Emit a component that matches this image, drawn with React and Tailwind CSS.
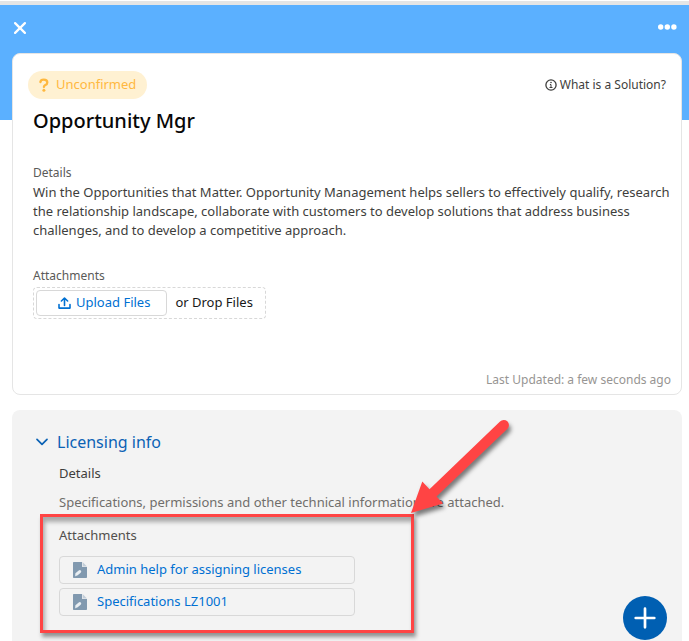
import { useState } from 'react';

// ==============================================================================
// ICONS
// ==============================================================================
const CloseIcon = () => (
  <svg className="h-3 w-3" viewBox="0 0 12 12" fill="none" stroke="currentColor" strokeWidth={2.2} strokeLinecap="round">
    <path d="M1.1 1.1l9.8 9.8M10.9 1.1l-9.8 9.8" />
  </svg>
);

const DotsIcon = () => (
  <svg className="h-[6px] w-5" viewBox="0 0 20 6" fill="currentColor">
    <circle cx="3.7" cy="3" r="2.7" />
    <circle cx="10.3" cy="3" r="2.7" />
    <circle cx="16.9" cy="3" r="2.7" />
  </svg>
);

const QuestionIcon = () => (
  <svg className="h-[14px] w-[10px]" viewBox="0 0 10 14" fill="none" stroke="currentColor" strokeWidth={2.3} strokeLinecap="round">
    <path d="M1.4 4C1.600 2.300 3 1.600 4.800 1.600s3.500 1 3.500 2.800-1.300 2.300-2.300 2.900C5.200 7.800 4.900 8.200 4.900 9" />
    <circle cx="4.9" cy="12.200" r="1.500" fill="currentColor" stroke="none" />
  </svg>
);

const InfoIcon = () => (
  <svg className="h-3 w-3" viewBox="0 0 12 12" fill="none" stroke="currentColor">
    <circle cx="6" cy="6" r="5.1" strokeWidth={1.3} />
    <circle cx="6" cy="3.5" r="0.8" fill="currentColor" stroke="none" />
    <path d="M4.9 5.5H6v3M4.500 8.500h3" strokeWidth={1} />
  </svg>
);

const UploadIcon = () => (
  <svg className="h-3 w-[13px]" viewBox="0 0 13 12" fill="none" stroke="currentColor" strokeWidth={1.6} strokeLinecap="round" strokeLinejoin="round">
    <path d="M1 7.6v3.5h11V7.6M6.5 8.4V1.2M3.4 4l3.1-3 3.1 3" />
  </svg>
);

const ChevronIcon = () => (
  <svg className="h-2 w-3" viewBox="0 0 12 8" fill="none" stroke="currentColor" strokeWidth={1.7} strokeLinecap="round" strokeLinejoin="round">
    <path d="M1 1.3l5 5 5-5" />
  </svg>
);

const FileIcon = () => (
  <svg className="h-4 w-[14px]" viewBox="0 0 14 16">
    <path d="M1 0h8v4c0 .6.400 1 1 1h4v10c0 .6-.400 1-1 1H1c-.6 0-1-.4-1-1V1c0-.6.400-1 1-1z" fill="#8199af" />
    <path d="M9.600 0L14 4.400h-3.600a.8.8 0 0 1-.8-.8z" fill="#c3ced9" />
    <path d="M3.700 12.200l3-2.600" stroke="#e9eef2" strokeWidth={3} strokeLinecap="round" />
    <path d="M2.400 13.800l.8-.8" stroke="#e9eef2" strokeWidth={1} strokeLinecap="round" />
  </svg>
);

const PlusIcon = () => (
  <svg className="h-[22px] w-[22px]" viewBox="0 0 22 22" fill="none" stroke="currentColor" strokeWidth={2.7} strokeLinecap="round">
    <path d="M11 1.700v18.600M1.700 11h18.600" />
  </svg>
);

// ==============================================================================
// CALLOUT: RED FRAME AND ARROW OVER THE ATTACHMENTS
// ==============================================================================
const Callout = () => (
  <div className="pointer-events-none absolute -top-[10px] -left-[19px] h-[119px] w-[374px] border-3 border-[#ff4444] shadow-[2px_4px_4px_rgba(0,0,0,0.4),inset_2px_5px_4px_rgba(0,0,0,0.3)]">
    <svg
      className="absolute -top-[103px] -right-[106px] h-[100px] w-[110px] overflow-visible drop-shadow-[2px_4px_2px_rgba(0,0,0,0.5)]"
      viewBox="0 0 110 100"
      fill="#ff4444"
    >
      <path d="M4 99L15.300 67.500L22.500 75.200L93 7.500A5 5 0 0 1 100.500 14.700L29.500 82.500L36 89.500z" />
    </svg>
  </div>
);

const files = ['Admin help for assigning licenses', 'Specifications LZ1001'];

// ==============================================================================
// PAGE
// ==============================================================================
export default function App() {
  const [open, setOpen] = useState(true);

  return (
    <div className="flex min-h-screen flex-col bg-white pt-px font-['Noto_Sans','Open_Sans',sans-serif] text-[13px] text-[#3e3e3c]">
      {/* Top bar */}
      <header className="flex h-[119px] items-start justify-between border-t-4 border-[#e5e5e5] bg-[#5bb0ff] px-3 pt-[15px] text-white">
        <button type="button" aria-label="Close" className="p-[2px]">
          <CloseIcon />
        </button>
        <button type="button" aria-label="More actions" className="py-1">
          <DotsIcon />
        </button>
      </header>

      {/* Solution card */}
      <section className="-mt-[67px] mr-[7px] ml-3 rounded-lg border border-[#e5e5e5] bg-white px-5 pb-1">
        <div className="-ml-[5px] flex items-center justify-between pt-[17px] pr-[1px]">
          <span className="flex h-7 items-center gap-[7px] rounded-full bg-[#fff1d2] px-[11px] text-[#ffb83f]">
            <QuestionIcon />
            Unconfirmed
          </span>
          <a href="#solution" className="-mr-[6px] flex items-center gap-[3px] text-xs">
            <InfoIcon />
            What is a Solution?
          </a>
        </div>
        <h1 className="mt-2 text-xl leading-7 font-medium text-[#080707]">Opportunity Mgr</h1>

        <h2 className="mt-7 text-xs leading-5 text-[#5a5a58]">Details</h2>
        <p className="-mr-4 leading-[19px]">
          Win the Opportunities that Matter. Opportunity Management helps sellers to effectively qualify, research the
          relationship landscape, collaborate with customers to develop solutions that address business challenges, and
          to develop a competitive approach.
        </p>

        <h2 className="mt-[26px] text-xs leading-5 text-[#5a5a58]">Attachments</h2>
        <div className="mt-px flex h-8 w-fit items-center rounded border border-dashed border-[#d8d8d8] pr-3 pl-[2px]">
          <button
            type="button"
            className="flex h-[26px] items-center gap-[5px] rounded border border-[#d8d8d8] pr-4 pl-[21px] text-[#0070d2]"
          >
            <UploadIcon />
            Upload Files
          </button>
          <span className="ml-2 text-[#181818]">or Drop Files</span>
        </div>

        <p className="mt-[51px] -mr-[10px] text-right text-xs leading-5 text-[#979593]">
          Last Updated: a few seconds ago
        </p>
      </section>

      {/* Licensing panel */}
      <section className="mt-[15px] mr-[7px] ml-3 flex-1 rounded-t-lg bg-[#f3f3f3] px-6 pt-5">
        <button
          type="button"
          aria-expanded={open}
          onClick={() => setOpen(!open)}
          className="flex items-center gap-[9px] text-base leading-6 text-[#0b62b5]"
        >
          <ChevronIcon />
          Licensing info
        </button>

        {open && (
          <div className="pl-[23px]">
            <h2 className="mt-[9px] leading-5">Details</h2>
            <p className="mt-[9px] leading-5 text-[#706e6b]">
              Specifications, permissions and other technical information are attached.
            </p>

            <div className="relative mt-3 pt-px">
              <h2 className="leading-5 text-[#514f4d]">Attachments</h2>
              <ul className="mt-[11px] flex max-w-[296px] flex-col gap-1">
                {files.map((name) => (
                  <li key={name}>
                    <a
                      href="#file"
                      className="flex h-7 items-center gap-[10px] rounded border border-[#d8d8d8] px-[13px] text-[#0070d2]"
                    >
                      <FileIcon />
                      {name}
                    </a>
                  </li>
                ))}
              </ul>
              <Callout />
            </div>
          </div>
        )}
      </section>

      {/* Add button */}
      <button
        type="button"
        aria-label="Add"
        className="fixed right-[22px] bottom-px flex h-11 w-11 items-center justify-center rounded-full bg-[#005fb2] text-white"
      >
        <PlusIcon />
      </button>
    </div>
  );
}
